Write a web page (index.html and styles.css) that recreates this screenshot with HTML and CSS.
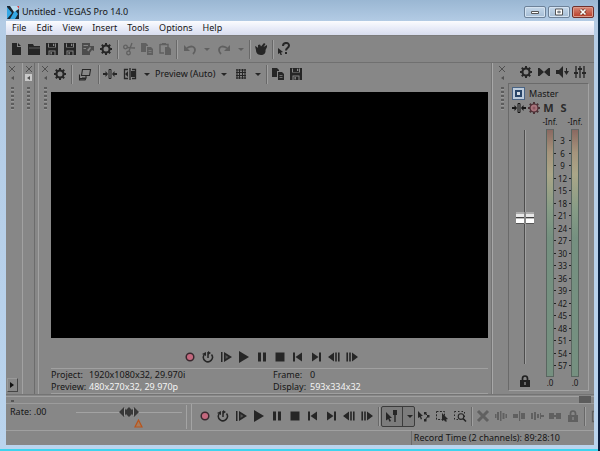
FILE: index.html
```html
<!DOCTYPE html>
<html lang="en">
<head>
<meta charset="utf-8">
<title>Untitled - VEGAS Pro 14.0</title>
<link rel="stylesheet" href="styles.css">
</head>
<body>
<svg class="sprite" aria-hidden="true">
  <symbol id="new" viewBox="0 0 14 14"><path d="M3 1h5v4h4v8H3zM9 1l3 3H9z"/></symbol>
  <symbol id="open" viewBox="0 0 14 14"><path d="M1 2h5l1 2h6v9H1z"/><path d="M2 6h11" stroke="#777" stroke-width=".7"/></symbol>
  <symbol id="save" viewBox="0 0 14 14"><path fill-rule="evenodd" d="M1 1h12v12H1zM3 1.500v4h8v-4zM3.500 8.500V13h7V8.500z"/><path d="M4 1h6v4H4zM4.500 9.500h5V13h-5z"/><path d="M8 1.700h1.200v2.400H8zM5.500 10h1.300v2.500H5.500z" fill="#8a8a8a"/></symbol>
  <symbol id="render" viewBox="0 0 14 14"><path fill-rule="evenodd" d="M1 1h8v4l-3 3 2 2 1-1v4H1zM2.500 3v1H7V3zM2.500 6v1H5V6z"/><path d="M7 10l3-4-2-2h5v5l-2-1-3 4z"/></symbol>
  <symbol id="gear" viewBox="0 0 14 14"><circle cx="7" cy="7" r="3.600" fill="none" stroke="currentColor" stroke-width="2"/><path d="M7 1v12M1 7h12M2.800 2.800l8.400 8.400M11.200 2.800l-8.400 8.400" stroke="currentColor" stroke-width="2"/><circle cx="7" cy="7" r="2.500" fill="#888"/></symbol>
  <symbol id="autogear" viewBox="0 0 14 14"><path d="M7 1v12M1 7h12M2.800 2.800l8.400 8.400M11.200 2.800l-8.400 8.400" stroke="#4a3236" stroke-width="2"/><circle cx="7" cy="7" r="4" fill="#a8747c" stroke="#4a2c32" stroke-width="1.200"/><circle cx="7" cy="7" r="1.500" fill="#8c5660"/></symbol>
  <symbol id="cut" viewBox="0 0 14 14"><g fill="none" stroke="currentColor" stroke-width="1.300"><circle cx="3.500" cy="5" r="1.800"/><circle cx="6.500" cy="11" r="1.800"/><path d="M5 5.500l8 .5M7 9l3-8"/></g></symbol>
  <symbol id="copy" viewBox="0 0 14 14"><path d="M1 1h5l2 2v1H6v6H1z"/><path fill-rule="evenodd" d="M7 5h4l2 2v6H7zM8.500 8v.8h3V8zM8.500 10v.8h3V10z"/></symbol>
  <symbol id="paste" viewBox="0 0 14 14"><path d="M2 2.500h8V5M2 2v9h4" fill="none" stroke="currentColor" stroke-width="1.400"/><path d="M4 1h4v2H4zM7 5h4l2 2v6H7z"/></symbol>
  <symbol id="undo" viewBox="0 0 14 14"><path d="M4 6c5-3 8-1 8 2 0 2-1 3-2 4" fill="none" stroke="currentColor" stroke-width="1.800"/><path d="M1 3v6h6z"/></symbol>
  <symbol id="redo" viewBox="0 0 14 14"><path d="M10 6C5 3 2 5 2 8c0 2 1 3 2 4" fill="none" stroke="currentColor" stroke-width="1.800"/><path d="M13 3v6H7z"/></symbol>
  <symbol id="hand" viewBox="0 0 14 14"><path d="M1 4l2 1 1 1V3l2-.5 1 2 3-3.500 1.500 1L9.500 5 13 3v2l-1.500 3c.5 3-1.500 5-4.500 5-4 0-5-3-5-5z"/></symbol>
  <symbol id="help" viewBox="0 0 14 14"><path d="M1 6l5 4-2 .5L5 13H3.500L2.800 11 1 12z"/><path d="M6 4c0-4 6-4 6-.500C12 6 9 6 9 8.500" fill="none" stroke="currentColor" stroke-width="2"/><path d="M8 10h2v2H8z"/></symbol>
  <symbol id="monitor" viewBox="0 0 14 14"><path d="M4.500 2.500h8l-1 6h-8zM8 9v2M1.500 7.500V13H7l1-2H4" fill="none" stroke="currentColor" stroke-width="1.100"/><path d="M1 11h7v1.500H1z"/></symbol>
  <symbol id="fx" viewBox="0 0 14 14"><path d="M0 6h2.500V4L5 7l-2.500 3V8H0zM14 6h-2.500V4L9 7l2.500 3V8H14z"/><path d="M6 2.500h2v9H6z" fill="none" stroke="currentColor"/></symbol>
  <symbol id="split" viewBox="0 0 14 14"><path d="M5 2.500H1.500v9H5M9 2.500h3.500v9H9M7 1v12" fill="none" stroke="currentColor" stroke-width="1.300"/><path d="M5 4v6L2 7zM8 4h4v6H8z"/></symbol>
  <symbol id="grid" viewBox="0 0 14 14"><path d="M3 2v10M5.500 2v10M8.500 2v10M11 2v10M2 3h10M2 5.500h10M2 8.500h10M2 11h10" stroke="currentColor" stroke-width="1.100"/></symbol>
  <symbol id="rec" viewBox="0 0 14 14"><circle cx="7" cy="7" r="3.800" fill="#c4687e" stroke="#38282e" stroke-width="1.500"/></symbol>
  <symbol id="loop" viewBox="0 0 14 14"><path d="M3 5a4.500 4.500 0 1 0 7.500-.5M7 2v6" fill="none" stroke="currentColor" stroke-width="1.500"/><path d="M1 4l4-2v4zM7 1l3 2-3 2z"/></symbol>
  <symbol id="playstart" viewBox="0 0 14 14"><path d="M2 2h1.500v10H2zM5 2l8 5-8 5z"/><path d="M6.500 5l3 2-3 2z" fill="#555"/></symbol>
  <symbol id="play" viewBox="0 0 14 14"><path d="M2 1l10 6-10 6z"/></symbol>
  <symbol id="pause" viewBox="0 0 14 14"><path d="M3 2.500h3v9H3zM8 2.500h3v9H8z"/></symbol>
  <symbol id="stop" viewBox="0 0 14 14"><path d="M2.500 2.500h9v9h-9z"/></symbol>
  <symbol id="first" viewBox="0 0 14 14"><path d="M2 2.500h2v9H2zM11 2.500v9L4.500 7z"/></symbol>
  <symbol id="last" viewBox="0 0 14 14"><path d="M10 2.500h2v9h-2zM3 2.500v9L9.500 7z"/></symbol>
  <symbol id="back" viewBox="0 0 14 14"><path d="M7 2.500v9L1 7zM8.200 2.500h1.600v9H8.200zM11 2.500h1.600v9H11z"/></symbol>
  <symbol id="fwd" viewBox="0 0 14 14"><path d="M7 2.500v9L13 7zM1.400 2.500H3v9H1.400zM4.200 2.500h1.600v9H4.200z"/></symbol>
  <symbol id="speakers" viewBox="0 0 14 14"><path d="M1 3h1.500L7 7l-4.500 4H1zM13 3h-1.500L7 7l4.500 4H13z"/></symbol>
  <symbol id="dim" viewBox="0 0 14 14"><path d="M1 5h3l4-4v12L4 9H1zM9 6h5l-2.500 4z"/><path d="M11 3h1v4h-1z"/></symbol>
  <symbol id="faders" viewBox="0 0 14 14"><path d="M3 1v12M7 1v12M11 1v12" stroke="currentColor" stroke-width="1.300"/><path d="M1 8h4M5 4h4M9 8h4" stroke="currentColor" stroke-width="2"/></symbol>
  <symbol id="lock" viewBox="0 0 14 14"><path d="M4.500 7V4.500a2.500 2.500 0 0 1 5 0V7" fill="none" stroke="currentColor" stroke-width="1.700"/><path fill-rule="evenodd" d="M2 6h10v7H2zM6.300 8v3h1.400V8z"/></symbol>
  <symbol id="edit" viewBox="0 0 14 14"><path d="M1 3l6 6H4.500L6 12l-1.500.7L3.300 10 1 11.500zM8 1h4v5h-1.300v7H9.300V6H8z"/></symbol>
  <symbol id="envelope" viewBox="0 0 14 14"><path d="M1 2l5 5H4l1 3-1.200.5L3 8 1 9z"/><path d="M7 3h2.500v2.500H7zM10 6h2.500v2.500H10zM7 10h2.500v2.500H7z"/><path d="M8 4l3 3-3 4" fill="none" stroke="currentColor"/></symbol>
  <symbol id="select" viewBox="0 0 14 14"><path d="M1.500 2.500h8v8h-8z" fill="none" stroke="currentColor" stroke-dasharray="2 1.400"/><path d="M7 4l6 6-2 .5 1 2h-2L9 11l-2 1z"/></symbol>
  <symbol id="zoom" viewBox="0 0 14 14"><path d="M1.500 2.500h10v8h-10z" fill="none" stroke="currentColor" stroke-dasharray="1.500 2"/><circle cx="8" cy="7.500" r="2.800" fill="#888" stroke="currentColor" stroke-width="1.100"/><path d="M10 9.500l3 3" stroke="currentColor" stroke-width="1.600"/></symbol>
  <symbol id="delete" viewBox="0 0 14 14"><path d="M2 2l10 10M12 2L2 12" stroke="currentColor" stroke-width="3"/></symbol>
  <symbol id="trim" viewBox="0 0 14 14"><path d="M1 5h1.500v4H1zM3 3h2v8H3zM6 2h1.500v10H6zM8.500 4h2v6h-2zM11.500 5H13v4h-1.500z"/></symbol>
  <symbol id="trimstart" viewBox="0 0 14 14"><path d="M1 5h5v4H1zM7 2h1.200v10H7zM9 4h4v6H9z"/></symbol>
  <symbol id="trimend" viewBox="0 0 14 14"><path d="M1 4h2v6H1zM4 3h2v8H4zM7 5h2v4H7zM10 4h1v6h-1zM11 6h3v2h-3z"/></symbol>
  <symbol id="cutevent" viewBox="0 0 14 14"><path d="M1 4h5v6H1zM8 4h5v6H8zM6 6h2v2H6z"/></symbol>
  <symbol id="bracket" viewBox="0 0 14 14"><path d="M8 2.500H3.500v10H8" fill="none" stroke="currentColor" stroke-width="1.300"/></symbol>
</svg>

<div class="window">
  <header class="titlebar">
    <svg class="logo" viewBox="0 0 12 13"><path fill="#1b2631" d="M0 0h12v13H0z"/><path fill="#35a7e4" d="M0 1l5 6-5 6zM8 4l3 4-3 5H3z"/><path fill="#b9dcf0" d="M3 0h9v3L7 6z"/><path fill="#d44" d="M10 0h2v3z"/></svg>
    <h1>Untitled - VEGAS Pro 14.0</h1>
    <div class="caption-buttons">
      <button aria-label="Minimize"><svg viewBox="0 0 12 8"><path d="M2.500 3.500h7v2h-7z" fill="#fff" stroke="#555"/></svg></button>
      <button aria-label="Maximize"><svg viewBox="0 0 12 8"><path d="M2.500 1h7v6h-7z" fill="#fff" stroke="#555"/><path d="M4.800 3.200h2.400v1.600H4.800z" fill="#a8bdd2" stroke="#555" stroke-width=".7"/></svg></button>
      <button class="close" aria-label="Close"><svg viewBox="0 0 12 8"><path d="M3.500 1.500l5 5M8.500 1.500l-5 5" stroke="#632" stroke-width="3"/><path d="M3.500 1.500l5 5M8.500 1.500l-5 5" stroke="#fff" stroke-width="1.700"/></svg></button>
    </div>
  </header>
  <nav class="menu"><button>File</button><button>Edit</button><button>View</button><button>Insert</button><button>Tools</button><button>Options</button><button>Help</button></nav>

  <div class="toolbar main-tools">
    <button aria-label="New"><svg><use href="#new"/></svg></button>
    <button aria-label="Open"><svg><use href="#open"/></svg></button>
    <button aria-label="Save"><svg><use href="#save"/></svg></button>
    <button aria-label="Save as"><svg><use href="#save"/></svg></button>
    <button class="dim" aria-label="Render as"><svg><use href="#render"/></svg></button>
    <button aria-label="Properties"><svg><use href="#gear"/></svg></button>
    <i class="sep"></i>
    <button class="off" aria-label="Cut"><svg><use href="#cut"/></svg></button>
    <button class="off" aria-label="Copy"><svg><use href="#copy"/></svg></button>
    <button class="off" aria-label="Paste"><svg><use href="#paste"/></svg></button>
    <i class="sep"></i>
    <button class="off wide" aria-label="Undo"><svg><use href="#undo"/></svg></button>
    <button class="off caret" aria-label="Undo list"></button>
    <button class="off wide" aria-label="Redo"><svg><use href="#redo"/></svg></button>
    <button class="off caret" aria-label="Redo list"></button>
    <i class="sep"></i>
    <button aria-label="Tutorials"><svg><use href="#hand"/></svg></button>
    <i class="sep"></i>
    <button aria-label="What's this"><svg><use href="#help"/></svg></button>
  </div>

  <main class="docks">
    <div class="strip first"><button class="x" aria-label="Close left dock"></button><button class="pin" aria-label="Collapse left dock"></button><i class="grip"></i><button class="expand" aria-label="Expand dock"></button></div>
    <div class="strip second"><button class="x" aria-label="Close trimmer"></button><button class="pin lit" aria-label="Collapse trimmer"></button><i class="grip"></i></div>
    <section class="preview">
      <div class="strip"><button class="x" aria-label="Close preview"></button><button class="pin" aria-label="Collapse preview"></button><i class="grip"></i></div>
      <div class="preview-body">
        <div class="toolbar preview-tools">
          <button aria-label="Project video properties"><svg><use href="#gear"/></svg></button>
          <i class="sep"></i>
          <button class="wide" aria-label="External monitor"><svg><use href="#monitor"/></svg></button>
          <i class="sep"></i>
          <button aria-label="Video output FX"><svg><use href="#fx"/></svg></button>
          <button class="wide" aria-label="Split screen view"><svg><use href="#split"/></svg></button>
          <button class="caret" aria-label="Split screen options"></button>
          <button class="quality">Preview (Auto)</button>
          <button class="caret" aria-label="Quality options"></button>
          <button class="wide" aria-label="Overlays"><svg><use href="#grid"/></svg></button>
          <button class="caret" aria-label="Overlay options"></button>
          <i class="sep"></i>
          <button aria-label="Copy snapshot"><svg><use href="#copy"/></svg></button>
          <button aria-label="Save snapshot"><svg><use href="#save"/></svg></button>
        </div>
        <div class="video"></div>
        <div class="toolbar transport">
          <button aria-label="Record"><svg><use href="#rec"/></svg></button>
          <button aria-label="Loop playback"><svg><use href="#loop"/></svg></button>
          <button aria-label="Play from start"><svg><use href="#playstart"/></svg></button>
          <button aria-label="Play"><svg><use href="#play"/></svg></button>
          <button aria-label="Pause"><svg><use href="#pause"/></svg></button>
          <button aria-label="Stop"><svg><use href="#stop"/></svg></button>
          <button aria-label="Go to start"><svg><use href="#first"/></svg></button>
          <button aria-label="Go to end"><svg><use href="#last"/></svg></button>
          <button aria-label="Previous frame"><svg><use href="#back"/></svg></button>
          <button aria-label="Next frame"><svg><use href="#fwd"/></svg></button>
        </div>
        <dl class="info">
          <dt>Project:</dt><dd>1920x1080x32, 29.970i</dd><dt>Frame:</dt><dd>0</dd>
          <dt>Preview:</dt><dd class="hot">480x270x32, 29.970p</dd><dt>Display:</dt><dd class="hot">593x334x32</dd>
        </dl>
      </div>
    </section>
    <section class="mixer">
      <div class="strip"><button class="x" aria-label="Close master bus"></button><button class="pin" aria-label="Collapse master bus"></button><i class="grip"></i></div>
      <div class="mixer-body">
        <div class="toolbar mixer-tools">
          <button aria-label="Audio properties"><svg><use href="#gear"/></svg></button>
          <button aria-label="Downmix output"><svg><use href="#speakers"/></svg></button>
          <button aria-label="Dim output"><svg><use href="#dim"/></svg></button>
          <button aria-label="Open mixing console"><svg><use href="#faders"/></svg></button>
        </div>
        <div class="bus">
          <div class="bus-name"><span class="bus-icon"></span><h2>Master</h2></div>
          <div class="bus-buttons">
            <button aria-label="Master FX"><svg><use href="#fx"/></svg></button>
            <button aria-label="Automation settings"><svg><use href="#autogear"/></svg></button>
            <button class="letter" aria-label="Mute">M</button>
            <button class="letter" aria-label="Solo">S</button>
          </div>
          <div class="levels">
            <div class="fader-col">
              <input class="fader" type="range" min="0" max="100" value="63" aria-label="Master volume">
              <button aria-label="Lock fader channels"><svg><use href="#lock"/></svg></button>
            </div>
            <div class="meters">
              <span class="peak">-Inf.</span><span></span><span class="peak">-Inf.</span>
              <i class="meter"></i>
              <ol class="scale"><li>3</li><li>6</li><li>9</li><li>12</li><li>15</li><li>18</li><li>21</li><li>24</li><li>27</li><li>30</li><li>33</li><li>36</li><li>39</li><li>42</li><li>45</li><li>48</li><li>51</li><li>54</li><li>57</li></ol>
              <i class="meter"></i>
              <span class="gain">.0</span><span></span><span class="gain">.0</span>
            </div>
          </div>
        </div>
      </div>
    </section>
  </main>

  <div class="scrollrow"><i class="tick"></i><i class="thumb"></i></div>
  <div class="bottom">
    <div class="rate">
      <label for="rate">Rate: .00</label>
      <div class="rate-slider">
        <input id="rate" type="range" min="0" max="100" value="50">
        <svg class="marker" viewBox="0 0 9 9"><path d="M4.500 1L8 8H1z" fill="#a87c5c" stroke="#b8541c" stroke-width="1.200"/></svg>
      </div>
    </div>
    <div class="toolbar timeline-tools">
      <button aria-label="Record"><svg><use href="#rec"/></svg></button>
      <button aria-label="Loop playback"><svg><use href="#loop"/></svg></button>
      <button aria-label="Play from start"><svg><use href="#playstart"/></svg></button>
      <button aria-label="Play"><svg><use href="#play"/></svg></button>
      <button aria-label="Pause"><svg><use href="#pause"/></svg></button>
      <button aria-label="Stop"><svg><use href="#stop"/></svg></button>
      <button aria-label="Go to start"><svg><use href="#first"/></svg></button>
      <button aria-label="Go to end"><svg><use href="#last"/></svg></button>
      <button aria-label="Previous frame"><svg><use href="#back"/></svg></button>
      <button aria-label="Next frame"><svg><use href="#fwd"/></svg></button>
      <i class="sep"></i>
      <div class="pressed"><button aria-label="Normal edit tool"><svg><use href="#edit"/></svg></button><button class="caret" aria-label="Edit tool list"></button></div>
      <button aria-label="Envelope tool"><svg><use href="#envelope"/></svg></button>
      <button aria-label="Selection tool"><svg><use href="#select"/></svg></button>
      <button aria-label="Zoom tool"><svg><use href="#zoom"/></svg></button>
      <i class="sep"></i>
      <button class="off" aria-label="Delete"><svg><use href="#delete"/></svg></button>
      <button class="off" aria-label="Trim"><svg><use href="#trim"/></svg></button>
      <button class="off" aria-label="Trim start"><svg><use href="#trimstart"/></svg></button>
      <button class="off" aria-label="Trim end"><svg><use href="#trimend"/></svg></button>
      <button class="off" aria-label="Split"><svg><use href="#cutevent"/></svg></button>
      <button class="off" aria-label="Lock"><svg><use href="#lock"/></svg></button>
      <i class="sep"></i>
      <button class="off" aria-label="Snapping"><svg><use href="#bracket"/></svg></button>
    </div>
  </div>
  <footer class="status"><span>Record Time (2 channels): 89:28:10</span></footer>
</div>
</body>
</html>
```
FILE: styles.css
```css
* { box-sizing: border-box; }
body {
  margin: 0;
  background: linear-gradient(#0c2c48, #0a1c3c);
  color: #161616;
  font: 10px/12px "Noto Sans", "Open Sans", sans-serif;
}
.sprite { position: absolute; width: 0; height: 0; }
button {
  display: flex;
  align-items: center;
  justify-content: center;
  padding: 0;
  border: 0;
  background: none;
  color: inherit;
  font: inherit;
}
h1, h2, dl, dd, ol { margin: 0; padding: 0; font: inherit; list-style: none; }

.window {
  display: flex;
  flex-direction: column;
  height: 100vh;
  min-height: 400px;
  margin-right: 2px;
  padding: 0 4px 4px 6px;
  border-bottom: 2px solid #3fd3ee;
  background: linear-gradient(#9ab7d3, #b4cce5 22px, #bad4ee);
}
.titlebar { display: flex; flex: none; align-items: center; height: 21px; padding-top: 3px; }
.logo { width: 12px; height: 13px; margin: 0 3px 0 1px; }
.titlebar h1 { flex: 1; font: 9px/12px "Noto Sans", "Open Sans", sans-serif; }
.caption-buttons { display: flex; gap: 2px; }
.caption-buttons button {
  width: 22px;
  height: 12px;
  border: 1px solid #6d8299;
  border-radius: 2px;
  background: linear-gradient(#c5d8ea, #a5bdd5);
  box-shadow: inset 0 0 0 1px #d5e3f1;
}
.caption-buttons svg { width: 12px; height: 8px; }
.caption-buttons .close { border-color: #6e302c; background: linear-gradient(#d88878, #b83c28); box-shadow: inset 0 0 0 1px #dc9c8c; }
.menu {
  display: flex;
  flex: none;
  gap: 10px;
  height: 14px;
  padding-left: 6px;
  background: linear-gradient(#fbfcfe, #e9ecf8 50%, #d8ddee);
  font-size: 9px;
}

.toolbar { display: flex; flex: none; align-items: center; color: #262626; }
.toolbar button { flex: none; width: 18px; height: 18px; }
.toolbar svg, .bus svg { width: 14px; height: 14px; fill: currentColor; }
.toolbar .wide { width: 22px; }
.toolbar .caret { width: 12px; }
.caret::before { content: ""; border: 3px solid transparent; border-top-color: currentColor; border-bottom: 0; }
.toolbar .off { color: #606060; }
.toolbar .dim { color: #4c4c4c; }
.sep { flex: none; width: 5px; height: 19px; background: linear-gradient(90deg, transparent 2px, #686868 2px, #686868 3px, #a0a0a0 3px, #a0a0a0 4px, transparent 4px); }
.main-tools { height: 28px; padding-left: 1px; border-top: 1px solid #7c7c7c; border-bottom: 1px solid #707070; background: #868686; }

.docks { display: flex; flex: 1; min-height: 0; background: #878787; }
.strip { display: flex; flex: none; flex-direction: column; align-items: center; width: 12px; padding: 2px 0; }
.strip.first { width: 17px; padding-right: 4px; border-right: 1px solid #a2a2a2; }
.strip.second { width: 16px; padding-right: 4px; border-right: 1px solid #a2a2a2; background: linear-gradient(90deg, transparent 11px, #6c6c6c 11px, #6c6c6c 12px, transparent 12px); }
.x { width: 6px; height: 6px; margin-top: 1px; background: linear-gradient(45deg, transparent 43%, #505050 43%, #505050 57%, transparent 57%), linear-gradient(-45deg, transparent 43%, #505050 43%, #505050 57%, transparent 57%); }
.pin { width: 7px; height: 7px; margin-top: 2px; }
.pin::before { content: ""; border: 2px solid transparent; border-right: 3px solid #505050; border-left: 0; }
.pin.lit { background: #c9c9c9; }
.grip { width: 3px; height: 24px; margin-top: 6px; background: repeating-linear-gradient(#5d5d5d 0 2px, #999 2px 3px, transparent 3px 4px); }
.expand { width: 11px; height: 14px; margin: auto 0 0; border: 1px outset #999; }
.expand::before { content: ""; border: 3px solid transparent; border-left: 4px solid #111; border-right: 0; }

.preview { display: flex; flex: 1; min-width: 0; border-right: 1px solid #747474; }
.preview-body { display: flex; flex: 1; flex-direction: column; min-width: 0; }
.preview-tools { height: 22px; margin-bottom: 7px; }
.preview .quality { width: auto; margin: 0 2px; font-size: 9px; color: #161616; }
.video { flex: 1; min-height: 0; margin-right: 3px; background: #000; }
.transport { justify-content: center; height: 30px; padding-top: 7px; }
.info {
  display: grid;
  grid-template-columns: 38px 184px 37px 1fr;
  margin-right: 3px;
  border-top: 1px solid #a0a0a0;
  border-bottom: 1px solid #a0a0a0;
  font-size: 9px;
  line-height: 12px;
}
.hot { color: #f4f4f4; }

.mixer { display: flex; flex: none; width: 102px; padding: 0 5px 0 3px; border-left: 1px solid #a8a8a8; }
.mixer-body { display: flex; flex: 1; flex-direction: column; padding-bottom: 3px; }
.mixer-tools { justify-content: flex-end; height: 18px; }
.bus { display: flex; flex: 1; flex-direction: column; min-height: 0; margin-top: 2px; padding: 3px 2px 0; border: 1px solid #a2a2a2; border-left-color: #6a6a6a; border-top-color: #6a6a6a; }
.bus-name { display: flex; align-items: center; gap: 5px; height: 13px; padding-left: 2px; font-size: 9px; }
.bus-icon { width: 11px; height: 11px; border: 2px solid #bccbdb; background: #274467; box-shadow: 0 0 0 1px #4a6484, inset 0 0 0 2px #274467, inset 0 0 0 4px #d4dde6; }
.bus-buttons { display: flex; align-items: center; height: 16px; }
.bus-buttons button { width: 15px; height: 15px; }
.bus-buttons .letter { font: bold 11px/14px "Noto Sans", sans-serif; color: #2c2c2c; }
.levels { display: flex; flex: 1; min-height: 0; }
.fader-col { display: flex; flex-direction: column; align-items: center; width: 28px; padding-top: 14px; }
.fader-col button { width: 18px; height: 18px; margin-top: 8px; color: #202020; }
.fader { flex: 1; min-height: 0; width: 18px; margin: 0; appearance: none; writing-mode: vertical-lr; direction: rtl; background: linear-gradient(90deg, transparent 8px, #4d4d4d 8px, #4d4d4d 9px, #a0a0a0 9px, #a0a0a0 10px, transparent 10px); }
.fader::-webkit-slider-thumb {
  appearance: none;
  width: 18px;
  height: 12px;
  background: linear-gradient(90deg, transparent 8px, #888 8px, #888 10px, transparent 10px), linear-gradient(#aaa 0 2px, #e8e8e8 2px 5px, #444 5px 6px, #bbb 6px 7px, #fff 7px 11px, #555 11px);
}
.meters { display: grid; flex: 1; grid-template-columns: 8px 17px 8px; grid-template-rows: 13px 1fr 13px; justify-content: center; min-height: 0; }
.peak, .gain { display: flex; justify-content: center; white-space: nowrap; font-size: 8px; line-height: 12px; }
.meter { border: 1px solid #596660; border-top-color: #666; background: linear-gradient(#8a6961, #a5947c 9%, #aaa688 18%, #879c86 32%, #759080 44%, #759080); }
.scale { display: flex; flex-direction: column; justify-content: space-between; padding: 6px 0; font-size: 8px; line-height: 11px; text-align: center; }
.scale li { display: flex; align-items: center; justify-content: space-between; }
.scale li::before, .scale li::after { content: ""; width: 2px; height: 1px; background: #222; }

.scrollrow { display: flex; flex: none; justify-content: space-between; height: 9px; padding: 1px 3px 0 5px; border-top: 1px solid #747474; background: linear-gradient(#878787 1px, #a0a0a0 1px, #a0a0a0 2px, #878787 2px); }
.tick { width: 3px; height: 2px; margin-top: 4px; background: #555; }
.thumb { width: 12px; height: 7px; background: #5c5c5c; }
.bottom { display: flex; flex: none; height: 27px; background: #878787; overflow: hidden; border-top: 1px solid #9c9c9c; }
.rate { display: flex; flex: none; width: 186px; padding: 1px 4px 0; border-right: 1px solid #a4a4a4; }
.rate label { width: 66px; font-size: 9px; line-height: 13px; }
.rate-slider { flex: 1; height: 24px; border-right: 1px solid #a4a4a4; }
.rate-slider input { display: block; width: 106px; height: 14px; margin: 0; appearance: none; background: linear-gradient(transparent 7px, #a3a3a3 7px, #a3a3a3 8px, transparent 8px); }
.rate-slider input::-webkit-slider-thumb {
  appearance: none;
  width: 20px;
  height: 10px;
  background: linear-gradient(90deg, transparent 5px, #999 5px, #999 6px, transparent 6px, transparent 14px, #999 14px, #999 15px, transparent 15px), linear-gradient(#383838, #383838);
  clip-path: polygon(0 50%, 25% 0, 35% 30%, 50% 0, 65% 30%, 75% 0, 100% 50%, 75% 100%, 65% 70%, 50% 100%, 35% 70%, 25% 100%);
}
.marker { display: block; width: 9px; height: 9px; margin-left: 58px; }
.timeline-tools { flex: 1; min-width: 0; padding: 0 0 2px 4px; overflow: hidden; }
.pressed { display: flex; flex: none; align-items: center; width: 34px; height: 21px; border: 1px solid #3c3c3c; border-radius: 2px; background: #7c7c7c; }
.pressed .caret { width: 14px; height: 19px; border-left: 1px solid #3c3c3c; }
.pressed button:first-child { width: 20px; }
.status { display: flex; flex: none; justify-content: flex-end; height: 15px; padding-right: 34px; border-top: 1px solid #a0a0a0; background: #878787; }
.status span { padding-left: 2px; border-left: 1px solid #6a6a6a; line-height: 14px; font-size: 9px; }
```
